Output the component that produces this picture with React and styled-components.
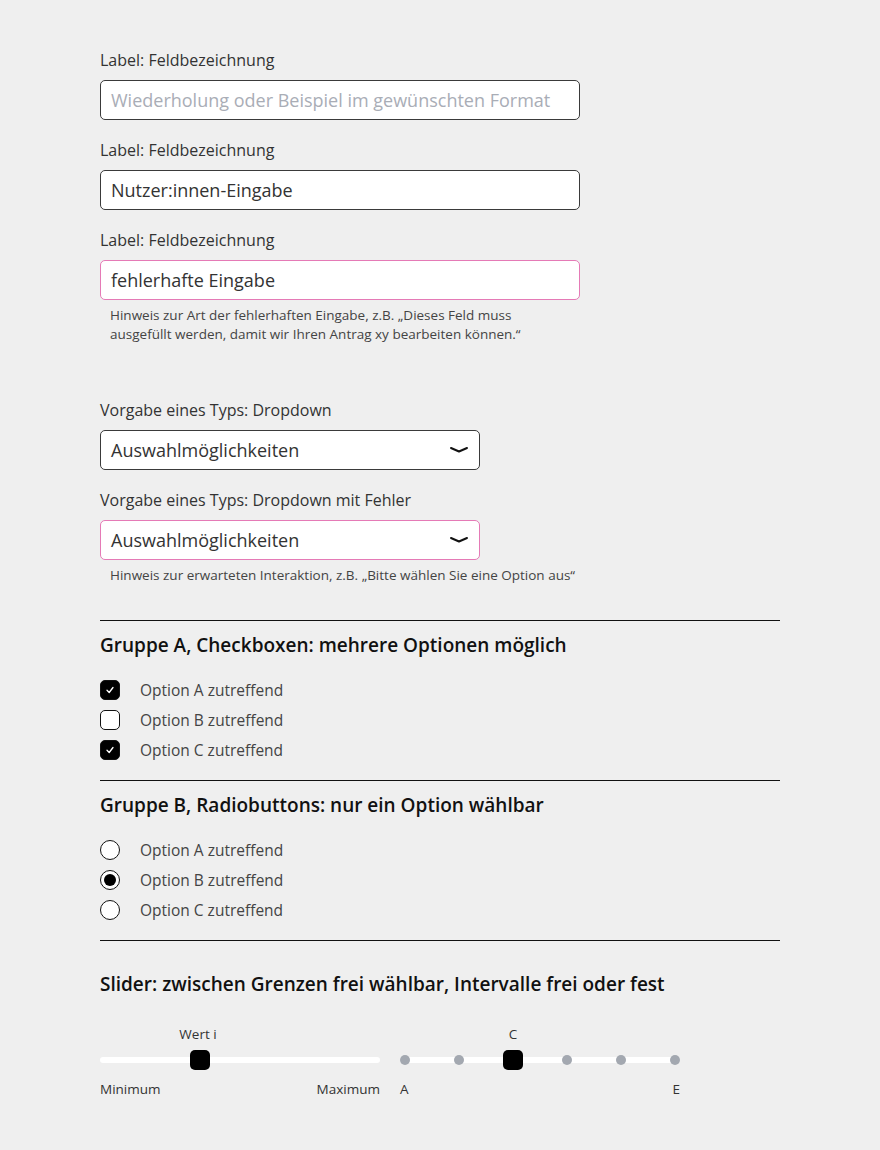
import React from "react";
import styled, { createGlobalStyle } from "styled-components";

const GlobalStyle = createGlobalStyle`
  body {
    margin: 0;
    background: #efefef;
    font-family: "Open Sans", "Noto Sans", "Liberation Sans", sans-serif;
    color: #333;
  }
`;

const Page = styled.div`
  width: 680px;
  padding: 49px 0 50px 100px;
  display: flex;
  flex-direction: column;
`;

const Field = styled.div`
  display: flex;
  flex-direction: column;
  margin-bottom: ${p => p.$gap ?? 19}px;
`;

const Label = styled.label`
  font-size: 16px;
  line-height: 22px;
  color: #333;
  margin-bottom: 9px;
`;

const Input = styled.div`
  box-sizing: border-box;
  width: ${p => p.$width ?? 480}px;
  height: 40px;
  background: #fff;
  border: 1px solid ${p => (p.$error ? "#e57ab6" : "#3a3a3a")};
  border-radius: 5px;
  padding: 0 10px;
  display: flex;
  align-items: center;
  justify-content: space-between;
  font-size: 18px;
  color: ${p => (p.$placeholder ? "#a9adb6" : "#333")};
`;

const Hint = styled.p`
  margin: 6px 0 0 10px;
  font-size: 13.5px;
  line-height: 19px;
  color: #444;
  white-space: nowrap;
`;

const Chevron = () => (
  <svg width="20" height="8" viewBox="0 0 20 8">
    <path d="M2 2 L10 5.5 L18 2" fill="none" stroke="#111" strokeWidth="2" strokeLinecap="round" strokeLinejoin="round" />
  </svg>
);

const Section = styled.section`
  border-top: 1px solid #111;
  padding-top: ${p => p.$top ?? 12}px;
  padding-bottom: ${p => p.$bottom ?? 20}px;
  display: flex;
  flex-direction: column;
`;

const Heading = styled.h3`
  margin: 0 0 ${p => p.$gap ?? 23}px;
  font-size: 19px;
  line-height: 24px;
  font-weight: 600;
  color: #111;
`;

const OptionList = styled.div`
  display: flex;
  flex-direction: column;
  gap: 10px;
`;

const Option = styled.div`
  display: flex;
  align-items: center;
  gap: 20px;
  height: 20px;
  font-size: 15.5px;
  color: #444;
`;

const Box = styled.span`
  box-sizing: border-box;
  width: 20px;
  height: 20px;
  border-radius: 5px;
  border: 1px solid #111;
  background: ${p => (p.$checked ? "#000" : "#fff")};
  display: flex;
  align-items: center;
  justify-content: center;
`;

const Radio = styled.span`
  box-sizing: border-box;
  width: 20px;
  height: 20px;
  border-radius: 50%;
  border: 1.5px solid #111;
  background: #fff;
  display: flex;
  align-items: center;
  justify-content: center;
  &::after {
    content: "";
    display: ${p => (p.$checked ? "block" : "none")};
    width: 12px;
    height: 12px;
    border-radius: 50%;
    background: #000;
  }
`;

const Check = () => (
  <svg width="10" height="10" viewBox="0 0 10 10">
    <path d="M2 5.3 L4.2 7.5 L8 2.5" fill="none" stroke="#fff" strokeWidth="1.3" strokeLinecap="round" strokeLinejoin="round" />
  </svg>
);

const Sliders = styled.div`
  display: flex;
  gap: 20px;
`;

const SliderBox = styled.div`
  width: ${p => p.$width}px;
  display: flex;
  flex-direction: column;
`;

const ValueRow = styled.div`
  position: relative;
  height: 20px;
  font-size: 13.5px;
  color: #333;
`;

const ValueLabel = styled.span`
  position: absolute;
  top: 0;
  transform: translateX(-50%);
  white-space: nowrap;
`;

const Track = styled.div`
  position: relative;
  height: 6px;
  margin: 12px 0 17px;
  background: #fff;
  border-radius: 3px;
`;

const Thumb = styled.span`
  position: absolute;
  top: 50%;
  width: 20px;
  height: 20px;
  border-radius: 5px;
  background: #000;
  transform: translate(-50%, -50%);
`;

const Dot = styled.span`
  position: absolute;
  top: 50%;
  width: 10px;
  height: 10px;
  border-radius: 50%;
  background: #a3a8b0;
  transform: translate(-50%, -50%);
`;

const Ends = styled.div`
  display: flex;
  justify-content: space-between;
  font-size: 13.5px;
  color: #333;
`;

const checks = [
  { label: "Option A zutreffend", checked: true },
  { label: "Option B zutreffend", checked: false },
  { label: "Option C zutreffend", checked: true },
];

const radios = [
  { label: "Option A zutreffend", checked: false },
  { label: "Option B zutreffend", checked: true },
  { label: "Option C zutreffend", checked: false },
];

const steps = [5, 59, 113, 167, 221, 275];

export default function App() {
  return (
    <>
      <GlobalStyle />
      <Page>
        <Field>
          <Label>Label: Feldbezeichnung</Label>
          <Input $placeholder>Wiederholung oder Beispiel im gewünschten Format</Input>
        </Field>
        <Field>
          <Label>Label: Feldbezeichnung</Label>
          <Input>Nutzer:innen-Eingabe</Input>
        </Field>
        <Field $gap={55}>
          <Label>Label: Feldbezeichnung</Label>
          <Input $error>fehlerhafte Eingabe</Input>
          <Hint>
            Hinweis zur Art der fehlerhaften Eingabe, z.B. „Dieses Feld muss
            <br />
            ausgefüllt werden, damit wir Ihren Antrag xy bearbeiten können.“
          </Hint>
        </Field>
        <Field>
          <Label>Vorgabe eines Typs: Dropdown</Label>
          <Input $width={380}>
            Auswahlmöglichkeiten
            <Chevron />
          </Input>
        </Field>
        <Field $gap={35}>
          <Label>Vorgabe eines Typs: Dropdown mit Fehler</Label>
          <Input $width={380} $error>
            Auswahlmöglichkeiten
            <Chevron />
          </Input>
          <Hint>Hinweis zur erwarteten Interaktion, z.B. „Bitte wählen Sie eine Option aus“</Hint>
        </Field>

        <Section>
          <Heading>Gruppe A, Checkboxen: mehrere Optionen möglich</Heading>
          <OptionList>
            {checks.map(o => (
              <Option key={o.label}>
                <Box $checked={o.checked}>{o.checked && <Check />}</Box>
                {o.label}
              </Option>
            ))}
          </OptionList>
        </Section>

        <Section>
          <Heading>Gruppe B, Radiobuttons: nur ein Option wählbar</Heading>
          <OptionList>
            {radios.map(o => (
              <Option key={o.label}>
                <Radio $checked={o.checked} />
                {o.label}
              </Option>
            ))}
          </OptionList>
        </Section>

        <Section $top={31}>
          <Heading $gap={29}>Slider: zwischen Grenzen frei wählbar, Intervalle frei oder fest</Heading>
          <Sliders>
            <SliderBox $width={280}>
              <ValueRow>
                <ValueLabel style={{ left: 98 }}>Wert i</ValueLabel>
              </ValueRow>
              <Track>
                <Thumb style={{ left: 100 }} />
              </Track>
              <Ends>
                <span>Minimum</span>
                <span>Maximum</span>
              </Ends>
            </SliderBox>
            <SliderBox $width={280}>
              <ValueRow>
                <ValueLabel style={{ left: 113 }}>C</ValueLabel>
              </ValueRow>
              <Track>
                {steps.map((x, i) =>
                  i === 2 ? <Thumb key={x} style={{ left: x }} /> : <Dot key={x} style={{ left: x }} />
                )}
              </Track>
              <Ends>
                <span>A</span>
                <span>E</span>
              </Ends>
            </SliderBox>
          </Sliders>
        </Section>
      </Page>
    </>
  );
}
